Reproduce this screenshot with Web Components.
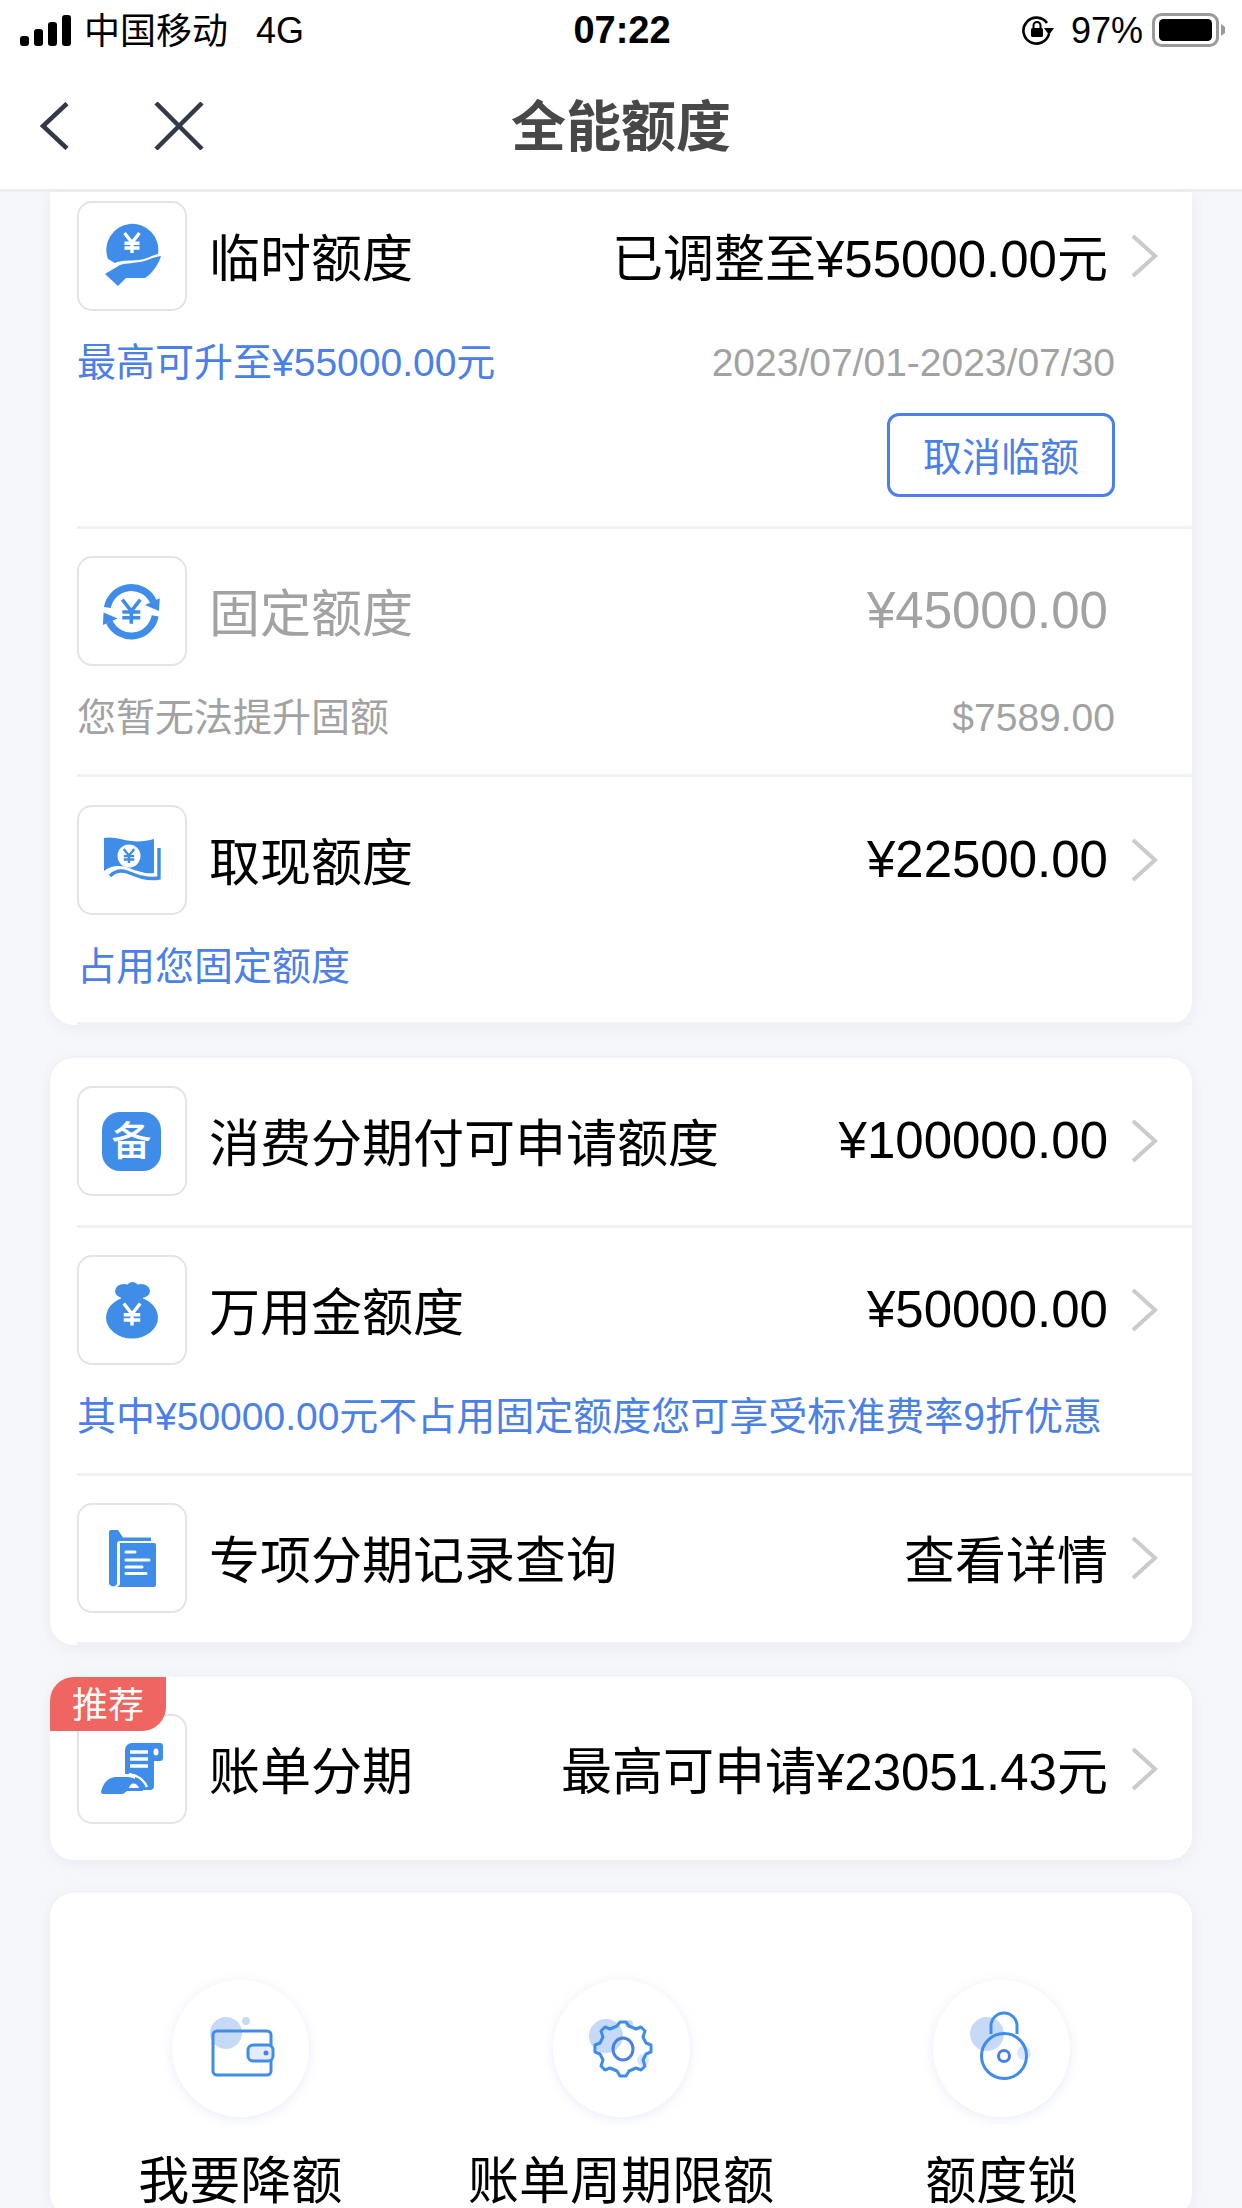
<!DOCTYPE html>
<html lang="zh-CN">
<head>
<meta charset="utf-8">
<title>全能额度</title>
<style>
html,body{margin:0;padding:0;width:1242px;height:2208px;overflow:hidden;background:#f6f7fb;}
body{font-family:"Liberation Sans","Noto Sans CJK SC",sans-serif;color:#000;}
main{display:flex;flex-direction:column;gap:35px;padding:0 50px;}
</style>
</head>
<body>
<status-bar></status-bar>
<nav-bar>全能额度</nav-bar>
<main>
  <quota-card style="--radius:0 0 24px 24px">
    <quota-row style="--pt:9px;--pb:29px" chevron>
      <row-icon slot="icon" name="hand"></row-icon>
      临时额度
      <span slot="value">已调整至¥55000.00元</span>
      <sub-line slot="sub" tone="blue">最高可升至¥55000.00元</sub-line>
      <sub-line slot="meta" tone="gray">2023/07/01-2023/07/30</sub-line>
      <outline-button slot="action">取消临额</outline-button>
    </quota-row>
    <quota-row muted style="--pt:27px;--pb:31px">
      <row-icon slot="icon" name="cycle"></row-icon>
      固定额度
      <span slot="value">¥45000.00</span>
      <sub-line slot="sub" tone="gray">您暂无法提升固额</sub-line>
      <sub-line slot="meta" tone="gray">$7589.00</sub-line>
    </quota-row>
    <quota-row chevron style="--pt:28px;--pb:30px">
      <row-icon slot="icon" name="note"></row-icon>
      取现额度
      <span slot="value">¥22500.00</span>
      <sub-line slot="sub" tone="blue">占用您固定额度</sub-line>
    </quota-row>
  </quota-card>

  <quota-card style="margin-top:-2px">
    <quota-row chevron style="--pt:28px;--pb:29px">
      <row-icon slot="icon" name="bei"></row-icon>
      消费分期付可申请额度
      <span slot="value">¥100000.00</span>
    </quota-row>
    <quota-row chevron style="--pt:27px;--pb:31px">
      <row-icon slot="icon" name="bag"></row-icon>
      万用金额度
      <span slot="value">¥50000.00</span>
      <sub-line slot="sub" tone="blue">其中¥50000.00元不占用固定额度您可享受标准费率9折优惠</sub-line>
    </quota-row>
    <quota-row chevron style="--pt:27px;--pb:29px">
      <row-icon slot="icon" name="folder"></row-icon>
      专项分期记录查询
      <span slot="value">查看详情</span>
    </quota-row>
  </quota-card>

  <quota-card style="margin-top:-3px">
    <corner-tag>推荐</corner-tag>
    <quota-row chevron plain style="--pt:37px;--pb:36px">
      <row-icon slot="icon" name="scroll"></row-icon>
      账单分期
      <span slot="value">最高可申请¥23051.43元</span>
    </quota-row>
  </quota-card>

  <quota-card style="margin-top:-2px">
    <action-grid>
      <quick-action name="wallet">我要降额</quick-action>
      <quick-action name="gear">账单周期限额</quick-action>
      <quick-action name="lock">额度锁</quick-action>
    </action-grid>
  </quota-card>
</main>

<script>
const BLUE = '#3f8de8';
const yen = (cx, cy, s, c, w) => `<path d="M${cx-s*.75} ${cy-s}L${cx} ${cy-s*.05}L${cx+s*.75} ${cy-s}M${cx-s*.75} ${cy+s*.02}H${cx+s*.75}M${cx-s*.75} ${cy+s*.5}H${cx+s*.75}M${cx} ${cy-s*.05}V${cy+s}" fill="none" stroke="${c}" stroke-width="${w}"/>`;

const ROW_ICONS = {
  hand: `<path d="M31 58A26 26 0 1 1 81 53C76 54 70 58 62 59C52 60 44 59 38 62Z" fill="${BLUE}"/>${yen(55,42,10,'#fff',3.4)}
    <path d="M28 73L43 64C50 62 58 62 63 61C70 60 76 56 84 55C82 62 76 72 68 77H49L41 85Z" fill="${BLUE}"/>`,
  cycle: `<path d="M30.400 51.500A24.300 24.300 0 0 1 76.300 45.400" fill="none" stroke="${BLUE}" stroke-width="7"/>
    <path d="M68 49L82.700 42.300L82 55Z" fill="${BLUE}"/>
    <path d="M78.200 59.900A24.300 24.300 0 0 1 32.300 66" fill="none" stroke="${BLUE}" stroke-width="7"/>
    <path d="M40.600 62.400L25.900 69.100L26.600 56.400Z" fill="${BLUE}"/>
    ${yen(54.3,55.7,12,BLUE,3.6)}`,
  note: `<path d="M27 33C36 31 46 35 54 36C62 37 70 36 77 34V68C70 69 62 67 52 63C44 60 34 60 27 66Z" fill="${BLUE}"/>
    <path d="M82 43V73C70 75 60 71 50 67C44 65 38 66 33 71" fill="none" stroke="${BLUE}" stroke-width="3.4"/>
    <circle cx="52" cy="51" r="11.500" fill="#fff"/>${yen(52,51,7,BLUE,2.4)}`,
  bei: `<rect x="25" y="26" width="59" height="59" rx="18" fill="${BLUE}"/>
    <text x="54.500" y="69" text-anchor="middle" font-size="40" font-weight="500" fill="#fff" font-family="'Noto Sans CJK SC',sans-serif">备</text>`,
  bag: `<ellipse cx="47" cy="36" rx="9" ry="7" fill="${BLUE}"/><ellipse cx="64" cy="36" rx="9" ry="7" fill="${BLUE}"/><ellipse cx="55.500" cy="33" rx="6" ry="6" fill="${BLUE}"/>
    <rect x="44" y="36" width="22" height="10" fill="${BLUE}"/>
    <ellipse cx="55" cy="62.500" rx="26" ry="21" fill="${BLUE}"/>${yen(55,59.5,11,'#fff',3.4)}`,
  folder: `<path d="M32 29A2 2 0 0 1 34 27H41L46 34.500H74V38H43C41 38 40 39 40 41V81C39 84 34 84 33 82C32 81 32 81 32 80Z" fill="${BLUE}"/>
    <path d="M43 40H77A2 2 0 0 1 79 42V82A2 2 0 0 1 77 84H40C42 83 43 82 43 80Z" fill="${BLUE}"/>
    <path d="M49 49H58M49 57H72M49 64H65M49 70.500H69" stroke="#fff" stroke-width="3" stroke-linecap="round" fill="none"/>`,
  scroll: `<path d="M55 29H83A3 3 0 0 1 86 32V44A3 3 0 0 1 83 47H77V72A4 4 0 0 1 73 76H58V60H48V36A7 7 0 0 1 55 29Z" fill="${BLUE}"/>
    <ellipse cx="79" cy="38" rx="2.500" ry="3.500" fill="#fff"/>
    <path d="M53 38H71M53 45H71M53 52H71" stroke="#fff" stroke-width="3.400" fill="none"/>
    <path d="M52 60C60 61 67 66 70 73" stroke="#fff" stroke-width="2.500" fill="none"/>
    <path d="M24 78C26 70 30 64 38 63H50C58 63 64 68 66 77H50L46 80H26Q24 80 24 78Z" fill="${BLUE}"/>
    <path d="M52 74C53 68 60 68 62 74Z" fill="#fff"/>`
};

const ACTION_ICONS = {
  wallet: `<circle cx="54" cy="53" r="16" fill="#c6daf7"/><circle cx="74" cy="41" r="4" fill="#c6daf7"/>
    <rect x="41" y="51" width="58" height="44" rx="4" fill="none" stroke="${BLUE}" stroke-width="3"/>
    <rect x="76" y="65" width="25" height="16" rx="5" fill="#e4eefb" stroke="${BLUE}" stroke-width="3"/>
    <circle cx="94" cy="73" r="2.500" fill="#4a7fe8"/>`,
  gear: `<circle cx="53" cy="56" r="17" fill="#c6daf7"/><circle cx="76" cy="44" r="4" fill="#c6daf7"/><circle cx="90" cy="80" r="6" fill="#dbe7fa"/>
    <path d="M64 46L67 42H73L76 46L83 49L88 47L92 51L90 57L93 63L98 65V72L93 74L90 80L92 86L88 90L83 88L76 91L73 96H67L64 91L57 88L52 90L48 86L50 80L47 74L42 72V65L47 63L50 57L48 51L52 47L57 49Z" fill="none" stroke="${BLUE}" stroke-width="3" stroke-linejoin="round"/>
    <ellipse cx="70" cy="69" rx="10" ry="11" fill="none" stroke="#4a7fe8" stroke-width="3"/>`,
  lock: `<circle cx="54" cy="54" r="17" fill="#c6daf7"/><circle cx="91" cy="73" r="7" fill="#dbe7fa"/>
    <path d="M58 54V46A13 13 0 0 1 84 46V54" fill="none" stroke="${BLUE}" stroke-width="3"/>
    <circle cx="71" cy="76" r="22.500" fill="none" stroke="${BLUE}" stroke-width="3"/>
    <circle cx="71" cy="76" r="5.500" fill="none" stroke="#4a7fe8" stroke-width="3"/>`
};

function define(tag, css, html, extra) {
  customElements.define(tag, class extends HTMLElement {
    constructor() {
      super();
      const r = this.attachShadow({mode: 'open'});
      r.innerHTML = `<style>${css}</style>${html}`;
    }
    connectedCallback() { if (extra) extra(this, this.shadowRoot); }
  });
}

define('status-bar', `
  :host{display:flex;align-items:center;height:60px;position:relative;background:#fff;color:#000;font-size:36px;}
  .left{display:flex;align-items:center;padding-left:20px;flex:1;}
  .carrier{margin-left:13px;line-height:1;position:relative;top:2px;}
  .net{margin-left:28px;position:relative;top:1px;}
  .time{font-size:38px;font-weight:700;width:200px;text-align:center;margin-left:-2px;}
  .right{display:flex;align-items:center;justify-content:flex-end;flex:1;padding-right:16px;}
  .pct{margin:0 9px 0 17px;position:relative;top:1px;}
  svg{display:block;}
`, `
  <div class="left">
    <svg width="51" height="31" viewBox="0 0 51 31"><rect x="0" y="21" width="9" height="10" rx="3"/><rect x="14" y="14" width="9" height="17" rx="3"/><rect x="28" y="7" width="9" height="24" rx="3"/><rect x="42" y="0" width="9" height="31" rx="3"/></svg>
    <span class="carrier">中国移动</span><span class="net">4G</span>
  </div>
  <div class="time">07:22</div>
  <div class="right">
    <svg width="32" height="30" viewBox="0 0 32 30"><path d="M25 8A13 13 0 1 0 27 19" fill="none" stroke="#000" stroke-width="2.600"/><path d="M22 13H32L27 20Z"/><rect x="9" y="13" width="12" height="9" rx="1.500"/><path d="M11.500 13V10.500A3.500 3.500 0 0 1 18.500 10.500V13" fill="none" stroke="#000" stroke-width="2"/></svg>
    <span class="pct">97%</span>
    <svg width="74" height="34" viewBox="0 0 74 34"><rect x="1.500" y="1.500" width="64" height="31" rx="8" fill="#fff" stroke="#9a9a9a" stroke-width="3"/><rect x="7" y="6" width="53" height="22" rx="4.500"/><path d="M69 11L73 14V20L69 23Z" fill="#9a9a9a"/></svg>
  </div>
`);

define('nav-bar', `
  :host{display:flex;align-items:center;justify-content:center;position:relative;height:129px;background:#fff;border-bottom:3px solid #eeeef0;color:#484848;font-size:55px;font-weight:700;}
  .icons{position:absolute;left:40px;top:42px;display:flex;gap:85px;}
  svg{display:block;}
  .t{position:relative;top:-3px;}
`, `
  <div class="icons">
    <svg width="29" height="48" viewBox="0 0 29 48"><path d="M27 1.500L3 24L27 46.500" fill="none" stroke="#333a45" stroke-width="4.500"/></svg>
    <svg width="50" height="48" viewBox="0 0 50 48"><path d="M2 1L48 47M48 1L2 47" fill="none" stroke="#333a45" stroke-width="4.500"/></svg>
  </div>
  <span class="t"><slot></slot></span>
`);

define('quota-card', `
  :host{display:block;position:relative;background:#fff;border-radius:var(--radius,24px);box-shadow:0 3px 14px rgba(200,205,220,.28);}
`, `<slot></slot>`);

define('quota-row', `
  :host{display:block;margin-left:27px;padding:var(--pt,27px) 0 var(--pb,29px) 0;border-bottom:3px solid #f0f1f3;font-size:51px;color:#000;}
  :host([plain]){border-bottom:0;}
  :host([muted]){color:#a2a2a2;}
  .main{display:flex;align-items:center;height:110px;padding-right:28px;}
  .label{margin-left:22px;flex:1;white-space:nowrap;position:relative;top:-1px;}
  .value{white-space:nowrap;position:relative;top:-1px;}
  .chev{width:34px;margin-left:22px;display:flex;justify-content:flex-start;}
  .chev svg{visibility:hidden;display:block;}
  :host([chevron]) .chev svg{visibility:visible;}
  .sub{display:flex;justify-content:space-between;margin:27px 77px 0 0;}
  .sub.empty{display:none;}
  .action{display:flex;justify-content:flex-end;margin:25px 77px 0 0;}
  .action.empty{display:none;}
`, `
  <div class="main">
    <slot name="icon"></slot>
    <div class="label"><slot></slot></div>
    <div class="value"><slot name="value"></slot></div>
    <div class="chev"><svg width="28" height="44" viewBox="0 0 28 44"><path d="M3 2L25 22L3 42" fill="none" stroke="#cbcbcb" stroke-width="4"/></svg></div>
  </div>
  <div class="sub"><slot name="sub"></slot><slot name="meta"></slot></div>
  <div class="action"><slot name="action"></slot></div>
`, (el, root) => {
  if (!el.querySelector('[slot=sub]')) root.querySelector('.sub').classList.add('empty');
  if (!el.querySelector('[slot=action]')) root.querySelector('.action').classList.add('empty');
});

define('row-icon', `
  :host{display:block;flex:none;width:110px;height:110px;box-sizing:border-box;border:2px solid #e4e4e4;border-radius:15px;background:#fff;}
  svg{display:block;margin:-2px;}
`, `<svg width="110" height="110" viewBox="0 0 110 110"></svg>`, (el, root) => {
  root.querySelector('svg').innerHTML = ROW_ICONS[el.getAttribute('name')];
});

define('sub-line', `
  :host{display:block;font-size:39px;line-height:50px;white-space:nowrap;}
  :host([tone=blue]){color:#4a80e8;}
  :host([tone=gray]){color:#a2a2a2;}
`, `<slot></slot>`);

define('outline-button', `
  :host{display:flex;align-items:center;justify-content:center;box-sizing:border-box;width:228px;height:84px;border:3px solid #4a80e8;border-radius:12px;color:#4a80e8;font-size:39px;padding-bottom:3px;}
`, `<slot></slot>`);

define('corner-tag', `
  :host{position:absolute;left:0;top:0;z-index:1;display:flex;align-items:center;justify-content:center;box-sizing:border-box;width:116px;height:54px;padding-bottom:4px;background:#ee6561;color:#fff;font-size:36px;border-radius:24px 0 24px 0;}
`, `<slot></slot>`);

define('action-grid', `
  :host{display:flex;justify-content:flex-start;padding-top:87px;}
`, `<slot></slot>`);

define('quick-action', `
  :host{display:flex;flex-direction:column;align-items:center;width:381px;font-size:51px;color:#000;}
  .c{width:137px;height:137px;border-radius:50%;background:#fff;box-shadow:0 2px 12px rgba(190,200,235,.35);}
  svg{display:block;}
  .l{margin-top:30px;white-space:nowrap;line-height:70px;}
`, `<div class="c"><svg width="137" height="137" viewBox="0 0 137 137"></svg></div><div class="l"><slot></slot></div>`, (el, root) => {
  root.querySelector('svg').innerHTML = ACTION_ICONS[el.getAttribute('name')];
});
</script>
</body>
</html>
